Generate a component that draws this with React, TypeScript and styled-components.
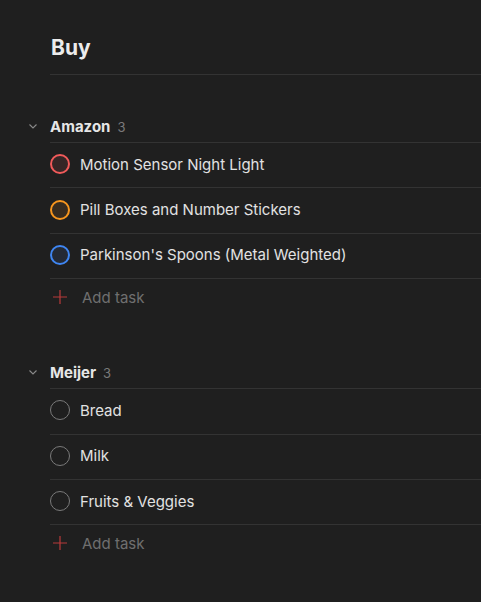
import styled, { createGlobalStyle } from 'styled-components'

const GlobalStyle = createGlobalStyle`
    html, body {
        margin: 0;
        padding: 0;
        background-color: #1f1f1f;
    }
    body {
        font-family: Inter, "Noto Sans", "Liberation Sans", sans-serif;
        color: #e8e8e8;
        -webkit-font-smoothing: antialiased;
    }
`

const Page = styled.div`
    display: flex;
    flex-direction: column;
    min-height: 602px;
    background-color: #1f1f1f;
    padding: 0 0 0 50px;
    box-sizing: border-box;
    overflow: hidden;
`

const Title = styled.h1`
    margin: 0;
    padding: 35px 0 13px 1px;
    font-size: 21px;
    font-weight: 700;
    line-height: 26px;
    color: #ececec;
    border-bottom: 1px solid #333333;
`

const Section = styled.section`
    display: flex;
    flex-direction: column;
    margin-top: 37px;

    & + & {
        margin-top: 41px;
    }
`

const SectionHeader = styled.div`
    position: relative;
    display: flex;
    align-items: baseline;
    gap: 7px;
    height: 31px;
    box-sizing: border-box;
    padding-top: 6px;
    line-height: 18px;
    border-bottom: 1px solid #333333;
`

const Chevron = styled.svg`
    position: absolute;
    left: -22px;
    top: 9px;
    width: 10px;
    height: 10px;
`

const SectionName = styled.span`
    font-size: 15px;
    font-weight: 700;
    color: #e6e6e6;
`

const Count = styled.span`
    font-size: 13px;
    color: #7a7a7a;
`

const TaskRow = styled.div`
    display: flex;
    align-items: center;
    gap: 10px;
    height: 45.4px;
    box-sizing: border-box;
    padding-bottom: 2px;
    border-bottom: 1px solid #333333;
`

const Check = styled.span<{ $color: string; $fill: string }>`
    display: block;
    width: 20px;
    height: 20px;
    box-sizing: border-box;
    border-radius: 50%;
    border: ${p => (p.$color === 'gray' ? '1px solid #7a7a7a' : `2px solid ${p.$color}`)};
    background-color: ${p => p.$fill};
    flex-shrink: 0;
`

const TaskText = styled.span`
    font-size: 15px;
    color: #e2e2e2;
`

const AddRow = styled.div`
    display: flex;
    align-items: center;
    gap: 15px;
    height: 38px;
    box-sizing: border-box;
    padding: 0 0 2px 3px;
`

const AddText = styled.span`
    font-size: 15px;
    color: #6f6f6f;
`

interface Task {
    name: string
    color: string
    fill: string
}

const sections: { name: string; tasks: Task[] }[] = [
    {
        name: 'Amazon',
        tasks: [
            { name: 'Motion Sensor Night Light', color: '#f05a5a', fill: '#352626' },
            { name: 'Pill Boxes and Number Stickers', color: '#f7961e', fill: '#372c20' },
            { name: "Parkinson's Spoons (Metal Weighted)", color: '#3f86f2', fill: '#242a35' },
        ],
    },
    {
        name: 'Meijer',
        tasks: [
            { name: 'Bread', color: 'gray', fill: 'transparent' },
            { name: 'Milk', color: 'gray', fill: 'transparent' },
            { name: 'Fruits & Veggies', color: 'gray', fill: 'transparent' },
        ],
    },
]

export default function App() {
    return (
        <>
            <GlobalStyle />
            <Page>
                <Title>Buy</Title>
                {sections.map(section => (
                    <Section key={section.name}>
                        <SectionHeader>
                            <Chevron viewBox="0 0 10 10">
                                <path d="M1.5 3.5 L5 7 L8.5 3.5" fill="none" stroke="#8a8a8a" strokeWidth="1.1" />
                            </Chevron>
                            <SectionName>{section.name}</SectionName>
                            <Count>{section.tasks.length}</Count>
                        </SectionHeader>
                        {section.tasks.map(task => (
                            <TaskRow key={task.name}>
                                <Check $color={task.color} $fill={task.fill} />
                                <TaskText>{task.name}</TaskText>
                            </TaskRow>
                        ))}
                        <AddRow>
                            <svg width="14" height="14" viewBox="0 0 14 14">
                                <path d="M7 0 V14 M0 7 H14" stroke="#b83a3a" strokeWidth="1.2" />
                            </svg>
                            <AddText>Add task</AddText>
                        </AddRow>
                    </Section>
                ))}
            </Page>
        </>
    )
}
